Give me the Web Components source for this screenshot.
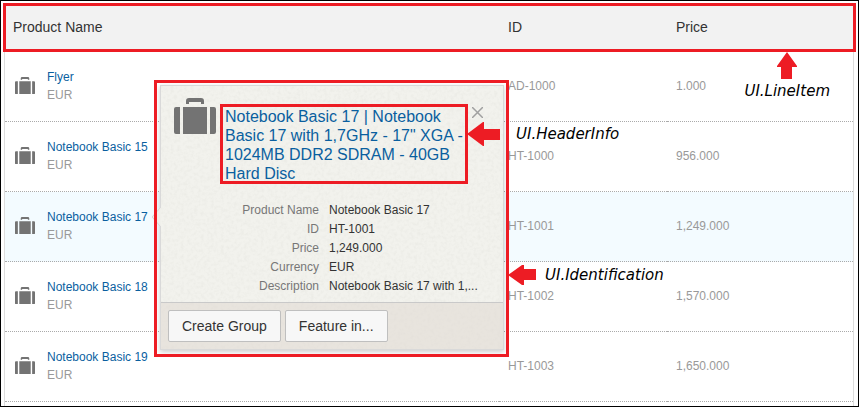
<!DOCTYPE html>
<html lang="en">
<head>
<meta charset="utf-8">
<title>Products</title>
<style>
  body { margin: 0; font-family: "Liberation Sans", Arial, sans-serif; font-size: 12px; background: #fff; }
</style>
</head>
<body>
<product-page></product-page>

<script>
const define = (name, html, setup) => {
  const template = document.createElement('template');
  template.innerHTML = html;
  customElements.define(name, class extends HTMLElement {
    constructor() {
      super();
      this.attachShadow({ mode: 'open' }).append(template.content.cloneNode(true));
    }
    connectedCallback() { if (setup) setup(this, this.shadowRoot); }
  });
};

define('case-icon', `
  <style>
    :host { display: block; flex: none; color: #737373; }
    svg { display: block; width: 100%; height: auto; fill: currentColor; }
  </style>
  <svg viewBox="0 0 42 36" aria-hidden="true">
    <path d="M2 9h4v27H2a2 2 0 0 1-2-2V11a2 2 0 0 1 2-2zM9 9h24v27H9zM36 9h4a2 2 0 0 1 2 2v23a2 2 0 0 1-2 2h-4z"/>
    <path d="M12 6V3a3 3 0 0 1 3-3h12a3 3 0 0 1 3 3v3h-3V4H15v2z"/>
  </svg>`);

define('mark-box', `
  <style>
    :host { display: block; position: absolute; box-sizing: border-box; border: 3px solid #ed1c24; pointer-events: none; }
  </style>`);

define('mark-note', `
  <style>
    :host { display: flex; position: absolute; align-items: center; gap: 9px; color: #000;
      font: italic 15px/18px "DejaVu Sans", sans-serif; white-space: nowrap; }
    :host([direction="up"]) { flex-direction: column; gap: 3px; }
    svg { display: block; flex: none; fill: #ed1c24; width: 28px; height: 20px; }
    :host([size="large"]) { gap: 16px; }
    :host([size="large"]) svg { width: 33px; height: 24px; }
    :host([direction="up"]) svg { width: 20px; height: 27px; }
  </style>
  <svg aria-hidden="true"><path/></svg>
  <span><slot></slot></span>`,
  (host, root) => {
    const up = host.getAttribute('direction') === 'up';
    const large = host.getAttribute('size') === 'large';
    root.querySelector('path').setAttribute('d',
      up ? 'M10 0L20 14V15H15V27H4V15H0V14Z'
         : large ? 'M0 12L16 0H17V7H33V18H17V24H16Z'
                 : 'M0 10L14 0H16V4H28V15H16V20H14Z');
  });

define('product-table', `
  <style>
    :host { display: block; border: 0 solid #ddd; border-width: 0 1px; box-sizing: border-box; }
    table { width: 100%; table-layout: fixed; border-collapse: separate; border-spacing: 0; }
    .id { width: 168px; }
    .price { width: 186px; }
    th, td { box-sizing: border-box; padding: 0 9px 2px; text-align: left; vertical-align: middle; }
    th { height: 49px; background: #f2f2f2; color: #333; font-size: 14px; font-weight: normal; }
    td { height: 70px; border-bottom: 1px dotted #aaa; color: #999; }
    th:first-child, td:first-child { padding-left: 8px; }
    tr.current td { background: #f3fbff; }
    .product { display: flex; align-items: center; gap: 12px; line-height: 18px; padding-left: 2px; }
    case-icon { width: 20px; }
    a { display: block; color: #0a5f9f; text-decoration: none; }
  </style>
  <table>
    <colgroup><col><col class="id"><col class="price"></colgroup>
    <thead><tr><th scope="col">Product Name</th><th scope="col">ID</th><th scope="col">Price</th></tr></thead>
    <tbody></tbody>
  </table>`,
  (host, root) => {
    const rows = [
      ['Flyer', 'AD-1000', '1.000'],
      ['Notebook Basic 15', 'HT-1000', '956.000'],
      ['Notebook Basic 17', 'HT-1001', '1,249.000'],
      ['Notebook Basic 18', 'HT-1002', '1,570.000'],
      ['Notebook Basic 19', 'HT-1003', '1,650.000']
    ];
    root.querySelector('tbody').innerHTML = rows.map(([name, id, price]) => `
      <tr${id === 'HT-1001' ? ' class="current"' : ''}>
        <td><div class="product"><case-icon></case-icon><div><a href="#${id}">${name}</a>EUR</div></div></td>
        <td>${id}</td><td>${price}</td>
      </tr>`).join('');
  });

define('action-button', `
  <style>
    :host { display: block; }
    button { display: block; height: 32px; padding: 0 13px; border: 1px solid #bfbfbf; border-radius: 2px;
      background: #f7f7f7; color: #333; font: inherit; font-size: 14px; cursor: pointer; }
  </style>
  <button type="button"><slot></slot></button>`);

define('product-card', `
  <style>
    :host { display: block; position: absolute; box-sizing: border-box; border: 1px solid #d9d9d9;
      background: #f2f2ed; box-shadow: 0 2px 5px rgba(0,0,0,.2); }
    .paper { position: absolute; inset: 0; width: 100%; height: 100%; }
    .pointer { position: absolute; left: -9px; top: 121px; width: 9px; height: 20px; }
    header, dl, footer { position: relative; }
    header { display: flex; align-items: flex-start; padding: 12px 20px 0 13px; }
    case-icon { width: 42px; }
    h2 { flex: 1; margin: 9px 7px 0 9px; font-size: 16px; line-height: 19px; font-weight: normal; }
    a { color: #0a5f9f; text-decoration: none; }
    .close { flex: none; width: 11px; height: 11px; margin-top: 9px; padding: 0; border: 0; background: none; cursor: pointer; }
    .close svg { display: block; width: 11px; height: 11px; stroke: #a0a0a0; stroke-width: 1.5; }
    dl { display: grid; grid-template-columns: 158px 1fr; column-gap: 10px; margin: 18px 0 0; padding-bottom: 6px; line-height: 19px; }
    dt { color: #777; text-align: right; }
    dd { margin: 0; color: #333; white-space: nowrap; }
    footer { display: flex; gap: 4px; padding: 7px; border-top: 1px solid #c9c9c9; background: rgba(224,217,209,.55); }
    .around { inset: -6px -6px -8px -7px; }
    .title { left: 59px; right: 35px; top: 18px; height: 80px; }
  </style>
  <svg class="pointer" viewBox="0 0 9 20" aria-hidden="true"><path d="M9 0L0 10L9 20" fill="#f0f0eb" stroke="#d9d9d9"/></svg>
  <svg class="paper" aria-hidden="true">
    <filter id="grain" x="0" y="0" width="100%" height="100%">
      <feTurbulence type="fractalNoise" baseFrequency="0.3" numOctaves="3" seed="4"/>
      <feColorMatrix values="0 0 0 0 .55  0 0 0 0 .55  0 0 0 0 .5  .3 0 0 0 -.12"/>
    </filter>
    <rect width="100%" height="100%" filter="url(#grain)"/>
  </svg>
  <header>
    <case-icon></case-icon>
    <h2><a href="#HT-1001"><slot></slot></a></h2>
    <button class="close" type="button" aria-label="Close"><svg viewBox="0 0 11 11"><path d="M0 0L11 11M11 0L0 11"/></svg></button>
  </header>
  <dl>
    <dt>Product Name</dt><dd>Notebook Basic 17</dd>
    <dt>ID</dt><dd>HT-1001</dd>
    <dt>Price</dt><dd>1,249.000</dd>
    <dt>Currency</dt><dd>EUR</dd>
    <dt>Description</dt><dd>Notebook Basic 17 with 1,...</dd>
  </dl>
  <footer><action-button>Create Group</action-button><action-button>Feature in...</action-button></footer>
  <mark-box class="around"></mark-box>
  <mark-box class="title"></mark-box>`);

define('product-page', `
  <style>
    :host { display: flex; flex-direction: column; position: relative; box-sizing: border-box; height: 100vh;
      overflow: hidden; border: 1px solid #000; padding: 2px 2px 0; }
    product-table { flex: 1; margin: 0 2px 0 1px; }
    .head { left: 2px; right: 2px; top: 2px; height: 49px; }
    product-card { left: 159px; top: 84px; width: 344px; }
    .line { right: 28px; top: 51px; }
    .info { left: 466px; top: 121px; }
    .ident { left: 507px; top: 264px; }
  </style>
  <product-table></product-table>
  <mark-box class="head"></mark-box>
  <product-card>Notebook Basic 17 | Notebook Basic 17 with 1,7GHz - 17" XGA - 1024MB DDR2 SDRAM - 40GB Hard Disc</product-card>
  <mark-note class="line" direction="up">UI.LineItem</mark-note>
  <mark-note class="info" size="large">UI.HeaderInfo</mark-note>
  <mark-note class="ident">UI.Identification</mark-note>`);
</script>
</body>
</html>
